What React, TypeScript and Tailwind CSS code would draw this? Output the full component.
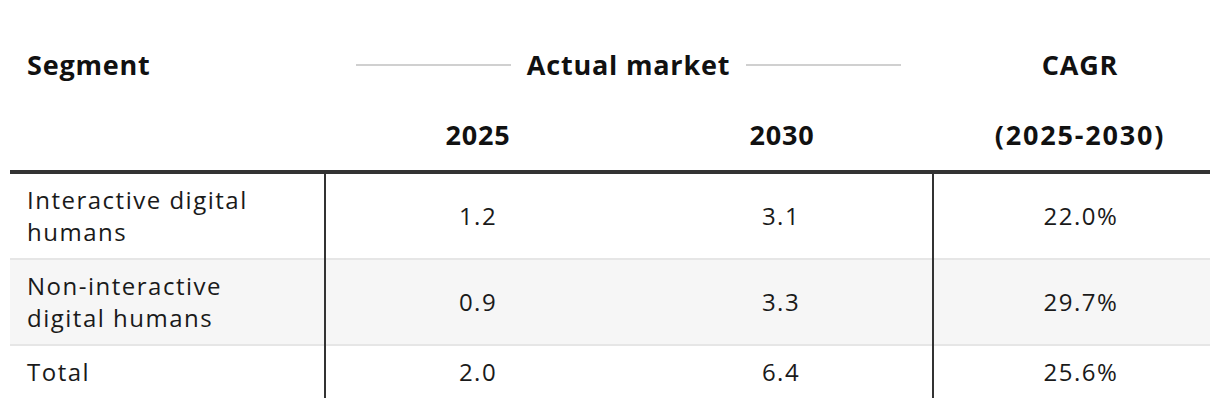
import React from "react";

const rows = [
  { seg: ["Interactive digital", "humans"], a: "1.2", b: "3.1", c: "22.0%", bg: "bg-white", h: "h-[84px]" },
  { seg: ["Non-interactive", "digital humans"], a: "0.9", b: "3.3", c: "29.7%", bg: "bg-[#f6f6f6]", h: "h-[84px]" },
  { seg: ["Total"], a: "2.0", b: "6.4", c: "25.6%", bg: "bg-white", h: "h-[52px]" },
];

export default function App() {
  return (
    <div className="w-[1220px] h-[408px] bg-white overflow-hidden" style={{ fontFamily: "'Open Sans', Lato, sans-serif" }}>
      <div className="ml-[10px] w-[1200px]">
        {/* header row 1 */}
        <div className="flex h-[100px] pt-[48px] font-bold text-[27px] leading-[34px] tracking-[0.8px] text-[#111]">
          <div className="w-[316px] pl-[17px]">Segment</div>
          <div className="w-[608px] h-[34px] flex items-center pl-[30px] pr-[33px]">
            <div className="flex-1 h-[2px] bg-[#d0d0d0]" />
            <div className="px-[16px]">Actual market</div>
            <div className="flex-1 h-[2px] bg-[#d0d0d0]" />
          </div>
          <div className="flex-1 text-center pl-[16px]">CAGR</div>
        </div>
        {/* header row 2 */}
        <div className="flex h-[70px] pt-[18px] font-bold text-[27px] leading-[34px] tracking-[0.8px] text-[#111]">
          <div className="w-[316px]" />
          <div className="w-[304px] text-center">2025</div>
          <div className="w-[304px] text-center">2030</div>
          <div className="flex-1 text-center pl-[16px] tracking-[1.8px]">(2025-2030)</div>
        </div>
        <div className="h-[4px] bg-[#333333]" />
        {rows.map((r, i) => (
          <div key={i}>
            {i > 0 && (
              <div className="flex h-[2px] bg-[#e6e6e6]">
                <div className="w-[314px]" />
                <div className="w-[2px] bg-[#333333]" />
                <div className="w-[606px]" />
                <div className="w-[2px] bg-[#333333]" />
              </div>
            )}
            <div className={`flex ${r.h} ${r.bg} text-[24px] leading-[32px] tracking-[1.5px] text-[#1a1a1a] font-normal`}>
              <div className="w-[314px] pl-[17px] flex flex-col justify-center">
                {r.seg.map((s, j) => (
                  <div key={j}>{s}</div>
                ))}
              </div>
              <div className="w-[2px] bg-[#333333]" />
              <div className="w-[304px] flex items-center justify-center">{r.a}</div>
              <div className="w-[302px] flex items-center justify-center">{r.b}</div>
              <div className="w-[2px] bg-[#333333]" />
              <div className="flex-1 flex items-center justify-center pl-[18px]">{r.c}</div>
            </div>
          </div>
        ))}
      </div>
    </div>
  );
}
